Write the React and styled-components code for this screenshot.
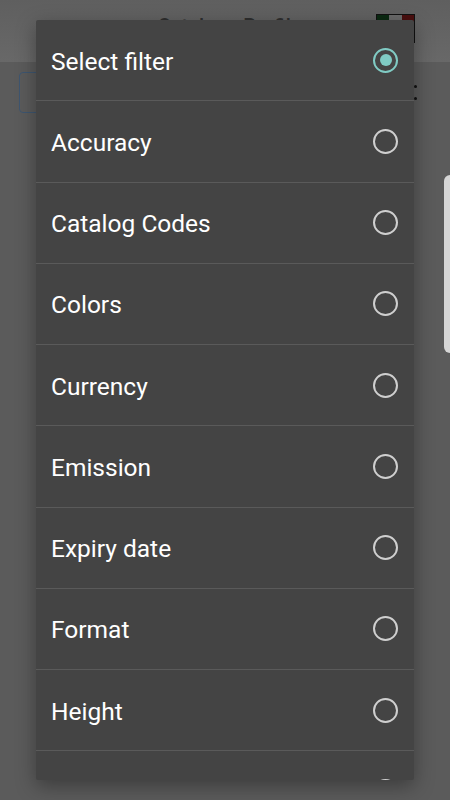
import React, { useState } from 'react'
import styled, { createGlobalStyle } from 'styled-components'

const GlobalStyle = createGlobalStyle`
  html, body {
    margin: 0;
    padding: 0;
    background: #5b5b5b;
    font-family: Roboto, 'Noto Sans', sans-serif;
  }
`;

const filters = [
  'Select filter',
  'Accuracy',
  'Catalog Codes',
  'Colors',
  'Currency',
  'Emission',
  'Expiry date',
  'Format',
  'Height',
];

export default function App() {
  const [selected, setSelected] = useState(0);

  return (
    <>
      <GlobalStyle />
      <Screen>
        <Header>
          <Title>Catalogo Profilo</Title>
          <Flag>
            <span style={{ background: '#0b2a12' }} />
            <span style={{ background: '#6a6a6a' }} />
            <span style={{ background: '#4a0f0f' }} />
          </Flag>
        </Header>
        <Toolbar>
          <SearchBox />
          <MoreDots>
            <i />
            <i />
          </MoreDots>
        </Toolbar>
        <EdgeHandle />

        <Overlay>
          <Dialog>
            {filters.map((name, i) => (
              <Row key={name} onClick={() => setSelected(i)}>
                <Label>{name}</Label>
                <Radio $checked={selected === i} />
              </Row>
            ))}
            {/* next item, scrolled out of view */}
            <Row $end>
              <Radio />
            </Row>
          </Dialog>
        </Overlay>
      </Screen>
    </>
  );
}

const Screen = styled.div`
  position: relative;
  width: 450px;
  height: 800px;
  overflow: hidden;
  background: #5b5b5b;
`;

const Header = styled.div`
  height: 62px;
  background: linear-gradient(#5f5f5f, #686868);
  display: flex;
  align-items: flex-start;
  justify-content: center;
  padding-top: 14px;
  box-sizing: border-box;
  position: relative;
`;

const Title = styled.div`
  font-size: 20px;
  color: #2e2e2e;
  font-weight: 500;
  margin-left: 10px;
`;

const Flag = styled.div`
  position: absolute;
  right: 35px;
  top: 14px;
  width: 39px;
  height: 29px;
  border: 1px solid #111;
  box-sizing: border-box;
  display: flex;
  span {
    flex: 1;
  }
`;

const Toolbar = styled.div`
  display: flex;
  align-items: center;
  justify-content: space-between;
  padding: 10px 33px 0 19px;
`;

const SearchBox = styled.div`
  width: 200px;
  height: 41px;
  border: 1px solid #3e5670;
  border-radius: 4px;
  box-sizing: border-box;
`;

const MoreDots = styled.div`
  display: flex;
  flex-direction: column;
  gap: 9px;
  i {
    width: 3px;
    height: 3px;
    background: #111;
    border-radius: 50%;
  }
`;

const EdgeHandle = styled.div`
  position: absolute;
  right: 0;
  top: 175px;
  width: 6px;
  height: 178px;
  background: #d6d6d6;
  border-radius: 8px 0 0 8px;
  z-index: 2;
`;

const Overlay = styled.div`
  position: absolute;
  inset: 0;
  padding: 20px 36px;
  box-sizing: border-box;
  z-index: 1;
`;

const Dialog = styled.div`
  height: 760px;
  background: #444444;
  border-radius: 2px;
  overflow: hidden;
  box-shadow: 0 6px 20px rgba(0, 0, 0, 0.35);
`;

const Row = styled.div`
  height: 81.25px;
  box-sizing: border-box;
  border-bottom: 1px solid #5a5a5a;
  display: flex;
  align-items: center;
  justify-content: ${(p) => (p.$end ? 'flex-end' : 'space-between')};
  padding: 0 16px 0 15px;
  cursor: pointer;
`;

const Label = styled.span`
  font-size: 24.5px;
  color: #ffffff;
  padding-top: 2px;
`;

const Radio = styled.span`
  width: 25px;
  height: 25px;
  box-sizing: border-box;
  border-radius: 50%;
  border: 2.5px solid ${(p) => (p.$checked ? '#80cbc4' : '#cfcfcf')};
  display: flex;
  align-items: center;
  justify-content: center;
  &::after {
    content: '';
    width: 12px;
    height: 12px;
    border-radius: 50%;
    background: ${(p) => (p.$checked ? '#80cbc4' : 'transparent')};
  }
`;
